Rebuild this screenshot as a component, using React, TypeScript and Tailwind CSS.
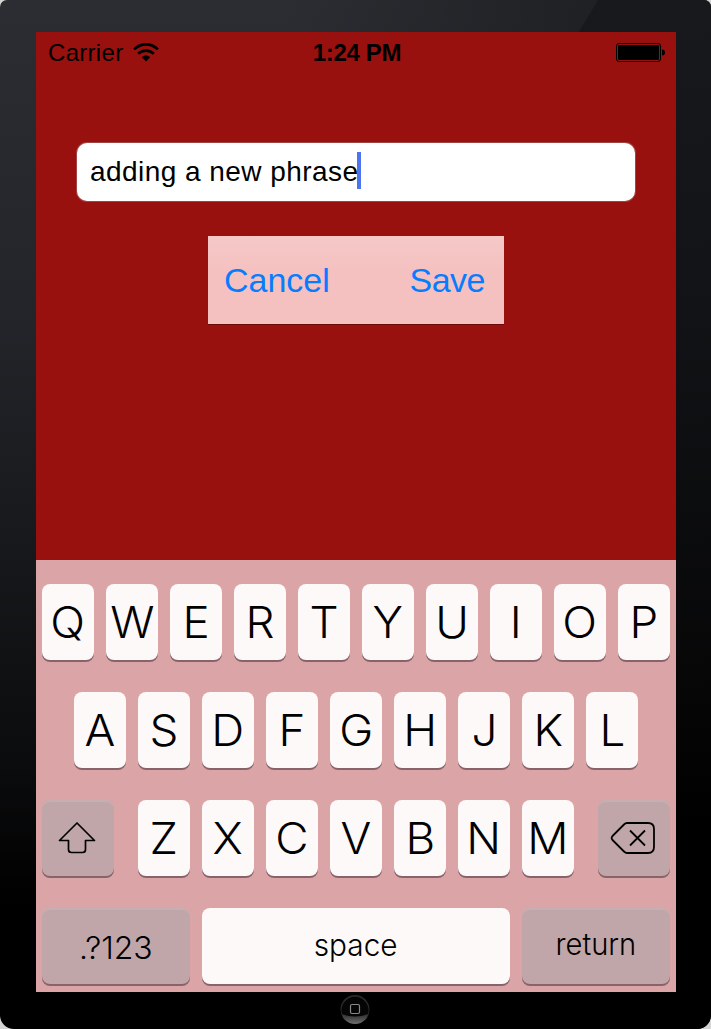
import type { ReactNode } from "react";

function LetterKey({ label }: { label: string }) {
  return (
    <div className="flex h-[76px] w-[52px] items-center justify-center rounded-[8px] bg-[#fdf9f8] pb-[1px] font-['Inter','Liberation_Sans',sans-serif] text-[44px] leading-none font-light text-black shadow-[0_2px_0_#87636a]">
      <span className="scale-x-[1.04]">{label}</span>
    </div>
  );
}

function ActionKey({ wide, children }: { wide?: boolean; children: ReactNode }) {
  return (
    <div
      className={`${wide ? "w-[148px]" : "w-[72px]"} flex h-[76px] items-center justify-center rounded-[8px] bg-[#c1a6a9] font-['Inter','Liberation_Sans',sans-serif] text-[31px] leading-none font-light text-black shadow-[0_2px_0_#87636a,inset_0_2px_0_#c6afb2]`}
    >
      {children}
    </div>
  );
}

function Letters({ keys }: { keys: string }) {
  return (
    <div className="flex gap-3">
      {keys.split("").map((k) => (
        <LetterKey key={k} label={k} />
      ))}
    </div>
  );
}

function StatusBar() {
  return (
    <div className="grid h-[40px] grid-cols-3 items-center pr-[10px] pl-3 text-[24px] leading-none">
      <div className="flex items-center gap-[10px] pt-[1px]">
        <span className="tracking-[0.3px]">Carrier</span>
        <svg width="26" height="20" viewBox="0 0 26 20" fill="none" stroke="black" strokeWidth="2.7">
          <path d="M1.1 6.4C8 -.4 18 -.4 24.900 6.400" />
          <path d="M5.200 10.800C9.500 6.600 16.500 6.600 20.800 10.800" />
          <path d="M8.800 14.200C11.300 11.800 14.700 11.800 17.200 14.200L13 18.500Z" fill="black" stroke="none" />
        </svg>
      </div>
      <div className="pt-[1px] text-center font-bold tracking-[-0.35px] whitespace-nowrap">1:24 PM</div>
      <div className="flex justify-end pt-[1px]">
        <svg width="50" height="20" viewBox="0 0 50 20">
          <rect x="0.500" y="0.500" width="44" height="18" rx="2.500" fill="none" stroke="black" />
          <rect x="2" y="2" width="41" height="15" rx="1.500" fill="black" />
          <path d="M46 6.500C48 6.500 49 7.500 49 9.500S48 12.500 46 12.500Z" fill="black" />
        </svg>
      </div>
    </div>
  );
}

export default function App() {
  return (
    <div className="h-[1029px] w-[711px] overflow-hidden bg-[#d5d5d5] font-['Liberation_Sans',Arial,sans-serif] text-black">
      <div className="relative flex h-[1029px] flex-col items-center overflow-hidden rounded-t-[7px] rounded-b-[14px] bg-[linear-gradient(180deg,#2b2d32_0%,#222429_32%,#15171a_55%,#0a0b0c_75%,#000_88%)]">
        <svg className="absolute top-0 left-0" width="711" height="1029">
          <defs>
            <linearGradient id="shade" x1="0" y1="0" x2="0" y2="1">
              <stop offset="0" stopColor="#17191c" />
              <stop offset="0.3" stopColor="#111316" />
              <stop offset="0.65" stopColor="#070708" />
              <stop offset="0.8" stopColor="#000" />
            </linearGradient>
            <linearGradient id="sheen" x1="0" y1="0" x2="1" y2="0">
              <stop offset="0.4" stopColor="#17191c" stopOpacity="0" />
              <stop offset="0.85" stopColor="#17191c" stopOpacity="0.65" />
            </linearGradient>
          </defs>
          <rect width="711" height="32" fill="url(#sheen)" />
          <path d="M598 0H711V1029H400V330Z" fill="url(#shade)" />
        </svg>
        <div className="relative mt-8 ml-px flex h-[960px] w-[640px] flex-col bg-[#98110e]">
          <StatusBar />
          <div className="mt-[71px] ml-[41px] flex h-[58px] w-[558px] items-center rounded-[10px] bg-white pl-[13px] shadow-[0_0_0_1px_#a04442]">
            <span className="text-[28px] leading-none tracking-[0.45px] whitespace-nowrap">adding a new phrase</span>
            <span className="-mt-[3px] -ml-[2px] h-[37px] w-[4px] bg-[#4d73ef]" />
          </div>
          <div className="mt-[35px] ml-[172px] flex h-[88px] w-[296px] items-center justify-between bg-[linear-gradient(180deg,#f4c9c8,#f4c1c0_40%,#f4c1c0)] pr-[19px] pl-[16px] text-[34px] leading-none text-[#087cff] shadow-[0_1px_0_#6a0907]">
            <span>Cancel</span>
            <span className="tracking-[-0.5px]">Save</span>
          </div>
          <div className="mt-auto flex h-[432px] flex-col items-center gap-8 bg-[#dba4a6] pt-6">
            <Letters keys="QWERTYUIOP" />
            <Letters keys="ASDFGHJKL" />
            <div className="flex gap-6">
              <ActionKey>
                <svg className="-ml-[2px]" width="38" height="34" viewBox="0 0 38 34" fill="none" stroke="black" strokeWidth="1.7" strokeLinejoin="round">
                  <path d="M19 2L1.500 19.500H10.500V28.500Q10.500 31.500 13.500 31.500H24.500Q27.500 31.500 27.500 28.500V19.500H36.500Z" />
                </svg>
              </ActionKey>
              <Letters keys="ZXCVBNM" />
              <ActionKey>
                <svg className="-ml-[2px]" width="46" height="34" viewBox="0 0 46 34" fill="none" stroke="black" strokeWidth="1.8" strokeLinejoin="round">
                  <path d="M17 2H38Q44 2 44 8V26Q44 32 38 32H17Q15.500 32 14 30.500L2.500 19Q.8 17 2.500 15L14 3.500Q15.500 2 17 2Z" />
                  <path d="M20 9.500L35 24.500M35 9.500L20 24.500" />
                </svg>
              </ActionKey>
            </div>
            <div className="flex gap-3">
              <ActionKey wide>
                <span className="mt-[2px] scale-x-[1.03]">.?123</span>
              </ActionKey>
              <div className="flex h-[76px] w-[308px] items-center justify-center rounded-[8px] bg-[#fdf9f8] pb-[4px] font-['Inter','Liberation_Sans',sans-serif] text-[31px] leading-none font-light shadow-[0_2px_0_#87636a]">
                <span className="scale-x-[0.96]">space</span>
              </div>
              <ActionKey wide>
                <span className="-mt-[5px] scale-x-[0.94]">return</span>
              </ActionKey>
            </div>
          </div>
        </div>
        <svg className="relative mt-[2px] -ml-px" width="30" height="32" viewBox="0 0 30 32">
          <defs>
            <linearGradient id="rim" x1="0" y1="0" x2="0" y2="1">
              <stop offset="0.65" stopColor="#2a2a2a" />
              <stop offset="1" stopColor="#707070" />
            </linearGradient>
          </defs>
          <circle cx="15" cy="15.500" r="14.500" fill="url(#rim)" />
          <path d="M2 20A13.500 13.500 0 1 1 28 20Q15 25 2 20Z" fill="#050505" />
          <rect x="10.500" y="10.500" width="9" height="9" rx="1.500" fill="none" stroke="#888" strokeWidth="1.2" />
        </svg>
      </div>
    </div>
  );
}
